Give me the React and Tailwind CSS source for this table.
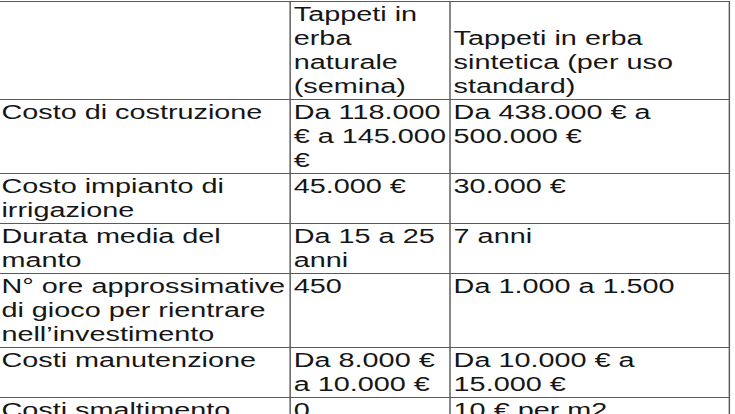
import React from "react";

const rows = [
  ["Costo di costruzione", "Da 118.000 € a 145.000 €", "Da 438.000 € a 500.000 €"],
  ["Costo impianto di irrigazione", "45.000 €", "30.000 €"],
  ["Durata media del manto", "Da 15 a 25 anni", "7 anni"],
  ["N° ore approssimative di gioco per rientrare nell’investimento", "450", "Da 1.000 a 1.500"],
  ["Costi manutenzione", "Da 8.000 € a 10.000 €", "Da 10.000 € a 15.000 €"],
  ["Costi smaltimento", "0", "10 € per m2"],
];

const cell = "border-r border-b border-[#5a5a5a] pb-px leading-[24px]";

export default function App() {
  return (
    <div className="w-[735px] h-[414px] overflow-hidden bg-white pt-px">
      <div
        className="w-[507px] origin-top-left scale-x-[1.44] text-[20px] text-[#161616]"
        style={{ fontFamily: '"Liberation Sans", Arial, sans-serif' }}
      >
        <div className="grid grid-cols-[202px_111px_194px] border-t border-[#5a5a5a]">
          <div className={`${cell} leading-[23.5px]`}></div>
          <div className={`${cell} leading-[23.5px] pl-[2px]`}>
            Tappeti in erba naturale (semina)
          </div>
          <div className={`${cell} leading-[23.5px] pl-[2px] pr-[3px] flex flex-col justify-end`}>
            <span>Tappeti in erba sintetica (per uso standard)</span>
          </div>
          {rows.map((r, i) => (
            <React.Fragment key={i}>
              <div className={`${cell} pl-px`}>{r[0]}</div>
              <div className={`${cell} pl-[2px]`}>{r[1]}</div>
              <div className={`${cell} pl-[2px] pr-[3px]`}>{r[2]}</div>
            </React.Fragment>
          ))}
        </div>
      </div>
    </div>
  );
}
